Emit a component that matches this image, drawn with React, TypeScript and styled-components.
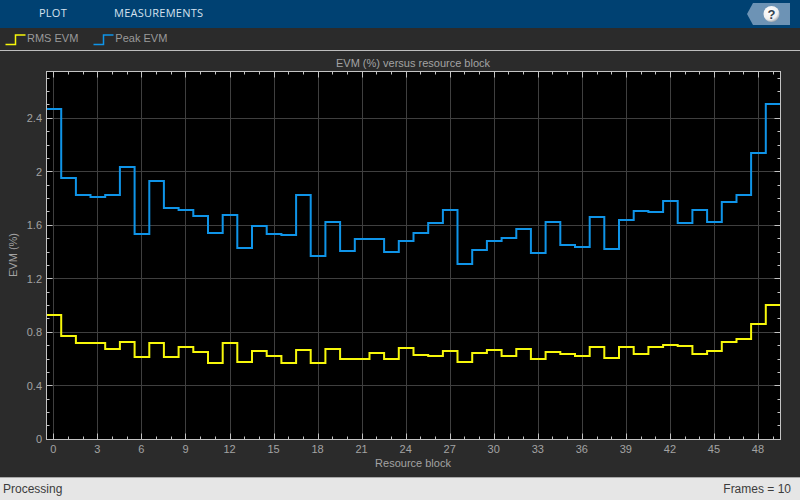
import React from "react";
import styled, { createGlobalStyle } from "styled-components";

const Global = createGlobalStyle`
  html, body { margin: 0; padding: 0; background: #2b2b2b; }
  #root { width: 800px; height: 500px; }
`;

const Window = styled.div`
  width: 800px; height: 500px; display: flex; flex-direction: column; overflow: hidden;
  font-family: "Liberation Sans", Arial, sans-serif; background: #2b2b2b;
`;
const TopBar = styled.div`
  height: 28px; flex: none; background: #004172; display: flex; align-items: center;
  padding-left: 39px; gap: 47px;
`;
const Tab = styled.span`
  font-family: "Open Sans", sans-serif; font-size: 11px; letter-spacing: 0.25px; color: #d5e2ee; line-height: 26px;
  position: relative; top: -1px;
`;
const HelpButton = styled.div`
  margin-left: auto; margin-right: 10px; width: 43px; height: 22px; flex: none; display: flex;
`;
const LegendBar = styled.div`
  height: 22px; flex: none; display: flex; align-items: center; padding-left: 5px;
  border-bottom: 1px solid #bdbdbd; background: #2b2b2b;
`;
const LegendItem = styled.div`
  display: flex; align-items: center; margin-right: 15px;
`;
const LegendLabel = styled.span`
  font-size: 11px; color: #9a9a9a; line-height: 20px; position: relative; top: -1px;
`;
const ChartArea = styled.div`
  flex: 1; min-height: 0; background: #2b2b2b;
`;
const StatusBar = styled.div`
  height: 22px; flex: none; background: #e6e6e6; border-top: 1px solid #a8a8a8;
  display: flex; align-items: center; justify-content: space-between;
  padding: 0 9px 0 3px; font-size: 12px; color: #3c3c3c;
`;

const L = 46.5, R = 780.5, T = 71.5, B = 439.5, OY = 51;
const W = (R - L) / 50;
const px = (v: number) => L + W * (v + 0.5);
const py = (v: number) => 439.3 - v * 133.75;
const snap = (n: number) => Math.floor(n) + 0.5;

const blue = [109, 178, 194.7, 197.3, 195.3, 167.3, 234.3, 181, 208.3, 210.3, 216.3, 233.3, 215.3, 248.3, 226.3, 234.3, 235.3, 195.3, 255.7, 222.3, 251.3, 239.3, 239.3, 252.3, 241, 233, 223.3, 210.3, 263.7, 250.3, 241, 238.3, 229.3, 253.3, 222.3, 245.3, 246.7, 217.3, 249.3, 220.3, 211.3, 212.3, 201.3, 223.3, 210.3, 222.3, 202.3, 195.3, 153.3, 104.3];
const yellow = [315.3, 336.3, 343.3, 343.3, 349.3, 342.3, 356.7, 343.3, 357.3, 347.3, 352.3, 363.3, 343.3, 362.3, 351.3, 356.3, 363.3, 350.3, 363.3, 349.3, 359.3, 359.3, 353.3, 359.3, 348.3, 355.3, 356.3, 351.3, 362.3, 353.3, 350.3, 356.3, 349.3, 359.3, 352.3, 354.3, 356.3, 347.3, 358.3, 347.3, 354.3, 347.3, 345.3, 346.3, 354.3, 351.3, 342.3, 339.3, 324.3, 305.3];

const stairs = (ys: number[]) =>
  ys.map((y, i) => `${i === 0 ? "M" : "L"}${(L + W * i).toFixed(1)} ${Math.round(y)} L${(L + W * (i + 1)).toFixed(1)} ${Math.round(y)}`).join(" ");

const xMajor = Array.from({ length: 17 }, (_, i) => i * 3);
const xMinor = Array.from({ length: 50 }, (_, i) => i).filter((i) => i % 3 !== 0);
const yMajor = [0, 0.4, 0.8, 1.2, 1.6, 2, 2.4];
const yMinor = Array.from({ length: 28 }, (_, i) => i / 10).filter((_, i) => i % 4 !== 0);

const tick = "#c4c4c4";
const label = "#a3a3a3";

const Chart = () => (
  <svg width={800} height={426} viewBox={`0 ${OY} 800 426`} style={{ display: "block" }} fontFamily='"Liberation Sans", Arial, sans-serif'>
    <rect x={L} y={T} width={R - L} height={B - T} fill="#000" />
    <g stroke="#3f3f3f" strokeWidth={1}>
      {xMajor.map((v) => <line key={v} x1={snap(px(v))} x2={snap(px(v))} y1={T} y2={B} />)}
      {yMajor.slice(1).map((v) => <line key={v} x1={L} x2={R} y1={snap(py(v))} y2={snap(py(v))} />)}
    </g>
    <g stroke={tick} strokeWidth={1}>
      {xMajor.map((v) => {
        const x = snap(px(v));
        return <g key={v}><line x1={x} x2={x} y1={T} y2={T + 6} /><line x1={x} x2={x} y1={B - 6} y2={B} /></g>;
      })}
      {xMinor.map((v) => {
        const x = snap(px(v));
        return <g key={v}><line x1={x} x2={x} y1={T} y2={T + 3} /><line x1={x} x2={x} y1={B - 3} y2={B} /></g>;
      })}
      {yMajor.slice(1).map((v) => {
        const y = snap(py(v));
        return <g key={v}><line x1={L} x2={L + 6} y1={y} y2={y} /><line x1={R - 6} x2={R} y1={y} y2={y} /></g>;
      })}
      {yMinor.map((v) => {
        const y = snap(py(v));
        return <g key={v}><line x1={L} x2={L + 3} y1={y} y2={y} /><line x1={R - 3} x2={R} y1={y} y2={y} /></g>;
      })}
    </g>
    <path d={stairs(yellow)} fill="none" stroke="#f7f70a" strokeWidth={2} strokeLinejoin="miter" />
    <path d={stairs(blue)} fill="none" stroke="#0f94e8" strokeWidth={2} strokeLinejoin="miter" />
    <rect x={L} y={T} width={R - L} height={B - T} fill="none" stroke={tick} strokeWidth={1} />
    <g fontSize={11} fill={label}>
      {xMajor.map((v) => <text key={v} x={px(v) - 0.5} y={453} textAnchor="middle">{v}</text>)}
      {yMajor.map((v) => <text key={v} x={42} y={Math.round(py(v)) + 4} textAnchor="end">{v}</text>)}
      <text x={413} y={67} textAnchor="middle">EVM (%) versus resource block</text>
      <text x={413} y={467} textAnchor="middle">Resource block</text>
      <text transform="translate(17 255) rotate(-90)" textAnchor="middle">EVM (%)</text>
    </g>
  </svg>
);

const HelpIcon = () => (
  <svg width={43} height={22} viewBox="0 0 43 22">
    <defs>
      <radialGradient id="ball" cx="40%" cy="35%" r="70%">
        <stop offset="0" stopColor="#ffffff" />
        <stop offset="0.7" stopColor="#f0f0f0" />
        <stop offset="1" stopColor="#8f9aa4" />
      </radialGradient>
    </defs>
    <polygon points="0,11 6,0 43,0 43,22 6,22" fill="#6d93b5" />
    <circle cx={24.5} cy={11} r={8} fill="url(#ball)" />
    <text x={24.5} y={15.5} textAnchor="middle" fontSize={13} fontWeight={700} fill="#33424f" fontFamily='"Liberation Sans", Arial, sans-serif'>?</text>
  </svg>
);

const LegendLine = ({ color }: { color: string }) => (
  <svg width={22} height={14} viewBox="0 0 22 14" style={{ display: "block", flex: "none" }}>
    <path d="M0.5 12.5 H10.5 V3 H20.5" fill="none" stroke={color} strokeWidth={1.5} />
  </svg>
);

export default function App() {
  return (
    <Window>
      <Global />
      <TopBar>
        <Tab>PLOT</Tab>
        <Tab>MEASUREMENTS</Tab>
        <HelpButton><HelpIcon /></HelpButton>
      </TopBar>
      <LegendBar>
        <LegendItem><LegendLine color="#f7f70a" /><LegendLabel>RMS EVM</LegendLabel></LegendItem>
        <LegendItem><LegendLine color="#0f94e8" /><LegendLabel>Peak EVM</LegendLabel></LegendItem>
      </LegendBar>
      <ChartArea><Chart /></ChartArea>
      <StatusBar><span>Processing</span><span>Frames = 10</span></StatusBar>
    </Window>
  );
}
